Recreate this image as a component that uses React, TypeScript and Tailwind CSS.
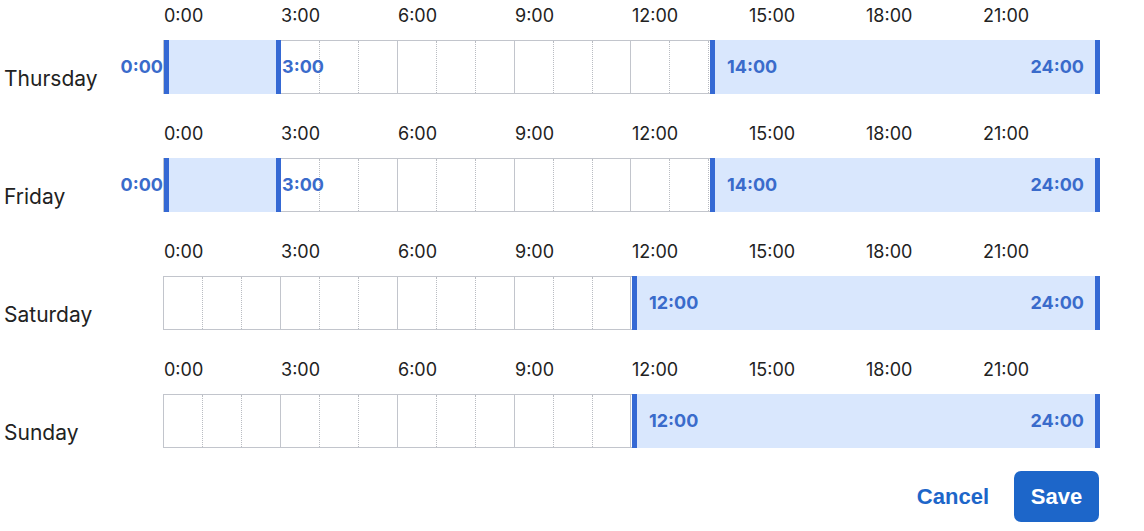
import React from 'react';

type Range = { start: number; end: number; outside?: boolean };

const days: { name: string; ranges: Range[] }[] = [
  { name: 'Thursday', ranges: [{ start: 0, end: 3, outside: true }, { start: 14, end: 24 }] },
  { name: 'Friday', ranges: [{ start: 0, end: 3, outside: true }, { start: 14, end: 24 }] },
  { name: 'Saturday', ranges: [{ start: 12, end: 24 }] },
  { name: 'Sunday', ranges: [{ start: 12, end: 24 }] },
];

const HOUR = 39;
const ticks = [0, 3, 6, 9, 12, 15, 18, 21];

function Selection({ range }: { range: Range }) {
  const left = range.start * HOUR;
  const width = (range.end - range.start) * HOUR;
  const label = "font-['Inter',sans-serif] text-[18px] font-bold text-[#3a6bcb] leading-none whitespace-nowrap";
  return (
    <div
      className="absolute -top-px -bottom-px flex items-center bg-[#d9e7fd]"
      style={{ left, width }}
    >
      <div className="absolute left-0 top-0 bottom-0 w-[5px] bg-[#3569d4]" />
      <div className="absolute right-0 top-0 bottom-0 w-[5px] bg-[#3569d4]" />
      {range.outside ? (
        <>
          <span className={`${label} absolute right-full mr-[1px]`}>{range.start}:00</span>
          <span className={`${label} absolute left-full ml-[1px]`}>{range.end}:00</span>
        </>
      ) : (
        <>
          <span className={`${label} absolute left-[17px]`}>{range.start}:00</span>
          <span className={`${label} absolute right-[16px]`}>{range.end}:00</span>
        </>
      )}
    </div>
  );
}

function DayRow({ name, ranges, last }: { name: string; ranges: Range[]; last?: boolean }) {
  return (
    <div className={`flex ${last ? '' : 'mb-[27px]'}`}>
      <div className="w-[163px] shrink-0 flex items-end pl-[4px] pb-px">
        <span className="text-[21px] leading-[28px] text-[#222]">{name}</span>
      </div>
      <div className="w-[936px] shrink-0">
        <div className="grid grid-cols-8 h-[37px]">
          {ticks.map((t) => (
            <span key={t} className="pl-[1px] text-[18px] leading-[25px] text-[#222]">
              {t}:00
            </span>
          ))}
        </div>
        <div className="relative h-[54px] border-y border-l border-[#c2c5cc] grid grid-cols-24">
          {Array.from({ length: 24 }).map((_, i) => (
            <div
              key={i}
              className={
                (i + 1) % 3 === 0
                  ? 'border-r border-solid border-[#c2c5cc]'
                  : 'border-r border-dotted border-[#b9bcc2]'
              }
            />
          ))}
          {ranges.map((r, i) => (
            <Selection key={i} range={r} />
          ))}
        </div>
      </div>
    </div>
  );
}

export default function App() {
  return (
    <div className="w-[1144px] h-[531px] bg-white pt-[3px] font-['Inter',sans-serif] overflow-hidden">
      {days.map((d, i) => (
        <DayRow key={d.name} name={d.name} ranges={d.ranges} last={i === days.length - 1} />
      ))}
      <div className="flex justify-end items-center w-[1099px] mt-[23px] font-['Liberation_Sans',Arial,sans-serif] font-bold text-[22px]">
        <button className="text-[#1d66c9] mr-[25px] cursor-pointer">Cancel</button>
        <button className="w-[85px] h-[51px] rounded-[7px] bg-[#1d66c9] text-white cursor-pointer">Save</button>
      </div>
    </div>
  );
}
